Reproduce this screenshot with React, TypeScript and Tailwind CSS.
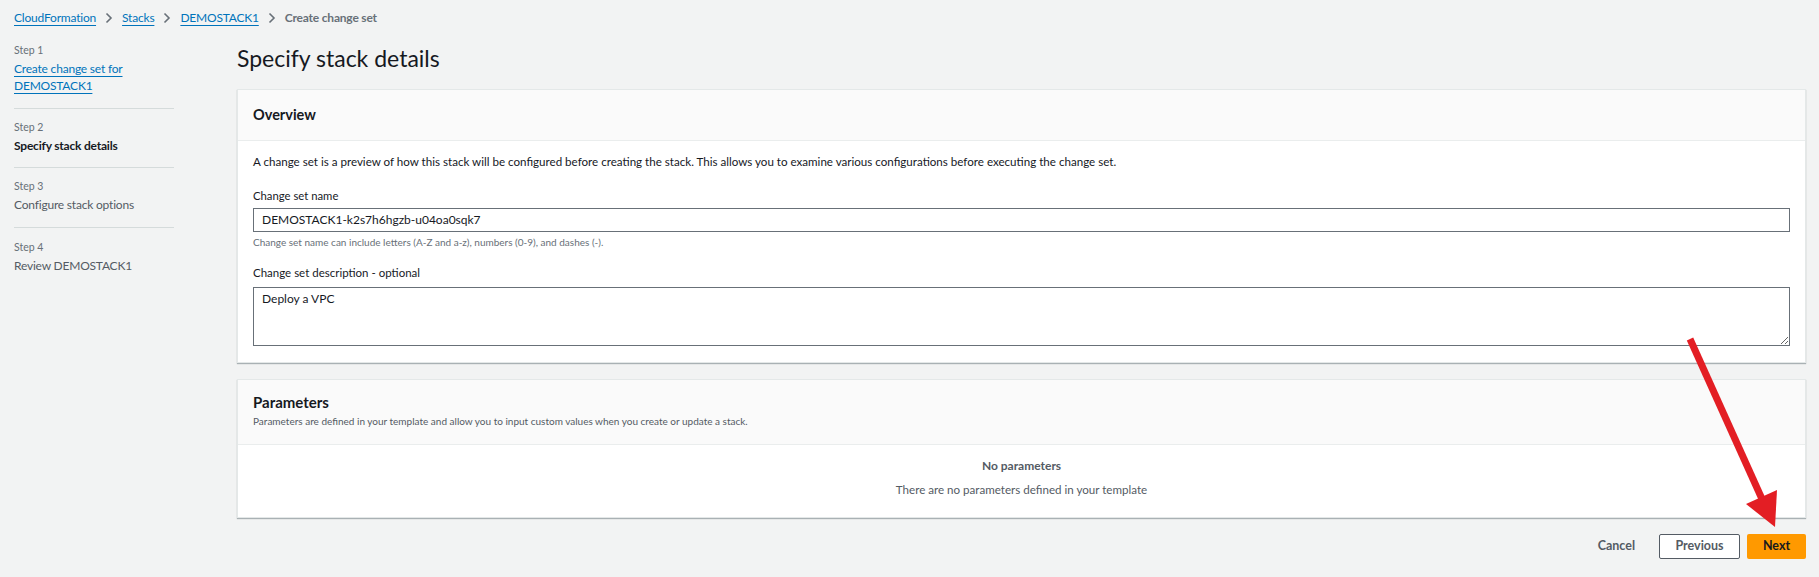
import React from "react";

function Chevron() {
  return (
    <svg width="10" height="12" viewBox="0 0 10 12" className="mx-[8px]">
      <path d="M2.5 1.5 L7 6 L2.5 10.5" fill="none" stroke="#687078" strokeWidth="1.6" />
    </svg>
  );
}

export default function App() {
  return (
    <div className="relative w-[1819px] h-[577px] overflow-hidden bg-[#f2f3f3] pt-[9px] text-[#16191f] font-['Lato','Liberation_Sans',sans-serif]">
      {/* Breadcrumb */}
      <div className="flex items-center pl-[14px] h-[18px] text-[12px] tracking-[-0.2px] leading-[18px]">
        <a className="text-[#0073bb] underline underline-offset-[3px] decoration-[1px]">CloudFormation</a>
        <Chevron />
        <a className="text-[#0073bb] underline underline-offset-[3px] decoration-[1px]">Stacks</a>
        <Chevron />
        <a className="text-[#0073bb] underline underline-offset-[3px] decoration-[1px]">DEMOSTACK1</a>
        <Chevron />
        <span className="text-[#687078] font-bold">Create change set</span>
      </div>

      <div className="flex">
        {/* Sidebar */}
        <div className="w-[160px] ml-[14px] pt-[15px] shrink-0 tracking-[-0.2px]">
          <div className="text-[10.5px] leading-[16px] text-[#687078] tracking-normal">Step 1</div>
          <div className="mt-[2px] text-[12px] leading-[17px]">
            <a className="text-[#0073bb] underline underline-offset-[3px] decoration-[1px]">Create change set for DEMOSTACK1</a>
          </div>
          <div className="mt-[14px] h-px bg-[#d5dbdb]" />
          <div className="mt-[10px] text-[10.5px] leading-[16px] text-[#687078] tracking-normal">Step 2</div>
          <div className="mt-[2px] text-[12px] leading-[17px] font-bold text-[#16191f]">Specify stack details</div>
          <div className="mt-[13px] h-px bg-[#d5dbdb]" />
          <div className="mt-[10px] text-[10.5px] leading-[16px] text-[#687078] tracking-normal">Step 3</div>
          <div className="mt-[2px] text-[12px] leading-[17px] text-[#545b64]">Configure stack options</div>
          <div className="mt-[14px] h-px bg-[#d5dbdb]" />
          <div className="mt-[11px] text-[10.5px] leading-[16px] text-[#687078] tracking-normal">Step 4</div>
          <div className="mt-[2px] text-[12px] leading-[17px] text-[#545b64]">Review DEMOSTACK1</div>
        </div>

        {/* Main */}
        <div className="flex-1 ml-[63px] mr-[13px] pt-[17px]">
          <h1 className="text-[23px] leading-[28px] font-normal text-[#16191f]">Specify stack details</h1>

          {/* Overview panel */}
          <div className="mt-[17px] bg-white border border-[#e4e8e8] shadow-[0_1px_1px_0_rgba(0,28,36,0.3)]">
            <div className="h-[51px] flex items-center px-[15px] bg-[#fafafa] border-b border-[#eaeded]">
              <h2 className="text-[14.5px] font-bold leading-[18px]">Overview</h2>
            </div>
            <div className="px-[15px] pt-[12px] pb-[16px]">
              <p className="text-[11.6px] leading-[18px]">
                A change set is a preview of how this stack will be configured before creating the stack. This allows you to examine various configurations before executing the change set.
              </p>
              <div className="mt-[16px] text-[11.3px] leading-[18px]">Change set name</div>
              <div className="mt-[3px] h-[24px] border border-[#687078] flex items-center px-[8px] text-[12px]">
                DEMOSTACK1-k2s7h6hgzb-u04oa0sqk7
              </div>
              <div className="mt-[3px] text-[10px] leading-[14px] text-[#687078]">
                Change set name can include letters (A-Z and a-z), numbers (0-9), and dashes (-).
              </div>
              <div className="mt-[15px] text-[11.5px] leading-[18px]">Change set description - optional</div>
              <textarea
                readOnly
                defaultValue="Deploy a VPC"
                className="mt-[5px] block w-full h-[59px] border border-[#687078] px-[8px] py-[3px] text-[12px] leading-[16px] text-[#16191f] outline-none resize-y"
              />
            </div>
          </div>

          {/* Parameters panel */}
          <div className="mt-[16px] bg-white border border-[#e4e8e8] shadow-[0_1px_1px_0_rgba(0,28,36,0.3)]">
            <div className="px-[15px] pt-[12px] pb-[16px] bg-[#fafafa] border-b border-[#eaeded]">
              <h2 className="text-[15px] font-bold leading-[20px]">Parameters</h2>
              <div className="mt-[2px] text-[10px] leading-[14px] text-[#545b64]">
                Parameters are defined in your template and allow you to input custom values when you create or update a stack.
              </div>
            </div>
            <div className="pt-[12px] pb-[18px] text-center">
              <div className="text-[12px] leading-[18px] font-bold text-[#545b64]">No parameters</div>
              <div className="mt-[6px] text-[11.6px] leading-[18px] text-[#545b64]">There are no parameters defined in your template</div>
            </div>
          </div>

          {/* Buttons */}
          <div className="mt-[16px] flex justify-end items-center gap-[7px]">
            <button className="h-[25px] px-[12px] mr-[5px] text-[12.5px] font-bold text-[#545b64]">Cancel</button>
            <button className="h-[25px] w-[81px] border border-[#545b64] bg-white text-[12.5px] font-bold text-[#545b64] rounded-[2px]">Previous</button>
            <button className="h-[25px] w-[59px] bg-[#ff9900] text-[12.5px] font-bold text-[#16191f] rounded-[2px]">Next</button>
          </div>
        </div>
      </div>

      {/* Red annotation arrow */}
      <svg className="absolute left-0 top-0 pointer-events-none" width="1819" height="577">
        <line x1="1690" y1="339" x2="1762" y2="499" stroke="#e31e24" strokeWidth="7" />
        <polygon points="1746,504 1777,490 1775,527" fill="#e31e24" />
      </svg>
    </div>
  );
}
